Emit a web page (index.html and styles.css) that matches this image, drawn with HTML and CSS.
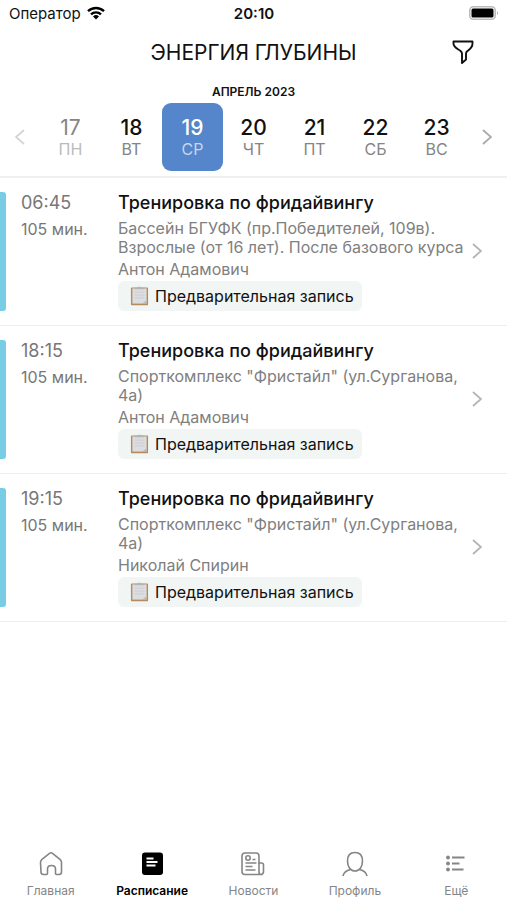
FILE: index.html
```html
<!DOCTYPE html>
<html lang="ru">
<head>
<meta charset="utf-8">
<meta name="viewport" content="width=device-width, initial-scale=1">
<title>Энергия глубины</title>
<link rel="stylesheet" href="styles.css">
</head>
<body>
<svg class="defs" aria-hidden="true">
  <symbol id="chevron" viewBox="0 0 10 16"><path d="M1 1l8 7-8 7" fill="none" stroke="currentColor" stroke-width="1.800"/></symbol>
  <symbol id="clipboard" viewBox="0 0 20 20">
    <rect x="1" y="1" width="18" height="19" rx="1" fill="#b58b5d"/>
    <rect x="2.500" y="2" width="15" height="16" fill="#dcdde1"/>
    <path d="M5 6h10M5 9h10M5 12h10" stroke="#cccdd2" stroke-width="1"/>
    <path d="M13 18l4-3v3z" fill="#b4b4b8"/>
    <path d="M5 3V1h3q0-1 2-1t2 1h3v2z" fill="#b5b5b3"/>
  </symbol>
</svg>
<header class="status">
  <span class="carrier">Оператор
    <svg class="wifi" viewBox="0 0 18 14" aria-hidden="true"><g fill="none" stroke="#000" stroke-width="2.4"><path d="M1 5.2a11.5 11.5 0 0 1 16 0"/><path d="M4 8.4a7.2 7.2 0 0 1 10 0"/></g><path d="M9 13.500l-3-3a4.300 4.300 0 0 1 6 0z"/></svg>
  </span>
  <time class="clock">20:10</time>
  <svg class="battery" viewBox="0 0 30 14" aria-hidden="true"><rect x=".8" y=".8" width="25.400" height="12.400" rx="3.500" fill="#fff" stroke="#bbb" stroke-width="1.600"/><rect x="2.500" y="2.500" width="22" height="9" rx="1.500"/><path d="M28 5q2 2 0 4z" fill="#aaa"/></svg>
</header>
<div class="titlebar">
  <h1>ЭНЕРГИЯ ГЛУБИНЫ</h1>
  <button class="filter" aria-label="Фильтр"><svg viewBox="0 0 22 24" aria-hidden="true"><path d="M1.500 1.500h19v2c0 4-2.500 5.500-4.500 7q-2 1.500-2 3v6l-4 3.500v-9.500q0-1.500-2-3c-2-1.500-6.500-3-6.500-7z" fill="none" stroke="#111" stroke-width="1.900" stroke-linejoin="round"/></svg></button>
</div>
<section class="calendar">
  <h2>АПРЕЛЬ 2023</h2>
  <div class="week">
    <button class="arrow prev" aria-label="Предыдущая неделя"><svg viewBox="0 0 10 16"><use href="#chevron"/></svg></button>
    <button class="day past"><b>17</b><span>ПН</span></button>
    <button class="day"><b>18</b><span>ВТ</span></button>
    <button class="day selected"><b>19</b><span>СР</span></button>
    <button class="day"><b>20</b><span>ЧТ</span></button>
    <button class="day"><b>21</b><span>ПТ</span></button>
    <button class="day"><b>22</b><span>СБ</span></button>
    <button class="day"><b>23</b><span>ВС</span></button>
    <button class="arrow" aria-label="Следующая неделя"><svg viewBox="0 0 10 16"><use href="#chevron"/></svg></button>
  </div>
</section>
<main class="list">
  <article class="item">
    <div class="when"><time>06:45</time><span>105 мин.</span></div>
    <div class="info">
      <h3>Тренировка по фридайвингу</h3>
      <p class="place">Бассейн БГУФК (пр.Победителей, 109в). Взрослые (от 16 лет). После базового курса</p>
      <p class="coach">Антон Адамович</p>
      <span class="tag"><svg viewBox="0 0 20 20" aria-hidden="true"><use href="#clipboard"/></svg>Предварительная запись</span>
    </div>
    <svg class="more" viewBox="0 0 10 16" aria-hidden="true"><use href="#chevron"/></svg>
  </article>
  <article class="item">
    <div class="when"><time>18:15</time><span>105 мин.</span></div>
    <div class="info">
      <h3>Тренировка по фридайвингу</h3>
      <p class="place">Спорткомплекс "Фристайл" (ул.Сурганова, 4а)</p>
      <p class="coach">Антон Адамович</p>
      <span class="tag"><svg viewBox="0 0 20 20" aria-hidden="true"><use href="#clipboard"/></svg>Предварительная запись</span>
    </div>
    <svg class="more" viewBox="0 0 10 16" aria-hidden="true"><use href="#chevron"/></svg>
  </article>
  <article class="item">
    <div class="when"><time>19:15</time><span>105 мин.</span></div>
    <div class="info">
      <h3>Тренировка по фридайвингу</h3>
      <p class="place">Спорткомплекс "Фристайл" (ул.Сурганова, 4а)</p>
      <p class="coach">Николай Спирин</p>
      <span class="tag"><svg viewBox="0 0 20 20" aria-hidden="true"><use href="#clipboard"/></svg>Предварительная запись</span>
    </div>
    <svg class="more" viewBox="0 0 10 16" aria-hidden="true"><use href="#chevron"/></svg>
  </article>
</main>
<nav class="tabs">
  <a href="#home"><svg viewBox="0 0 26 26" aria-hidden="true"><path d="M2.500 11.500q0-2 1.500-3.200l7.500-6q1.500-1.200 3 0l7.500 6q1.500 1.200 1.500 3.200v9.500q0 2.500-2.500 2.500h-2.500q-1 0-1-1v-4.500q0-3.500-4-3.500t-4 3.500v4.500q0 1-1 1h-3q-2.500 0-2.500-2.500z"/></svg>Главная</a>
  <a href="#schedule" class="active"><svg viewBox="0 0 26 26" aria-hidden="true"><rect x="3" y="1.500" width="21" height="22.500" rx="3" fill="#000" stroke="none"/><path d="M7.500 7.500h7M7.500 11h11M7.500 14.500h9" stroke="#fff" stroke-width="1.800"/></svg>Расписание</a>
  <a href="#news"><svg viewBox="0 0 26 26" aria-hidden="true"><path d="M21 23.500H5q-3 0-3-3V5q0-3 3-3h11q3 0 3 3v16q0 2.500 2 2.500t2.500-2.500V14q0-2-2-2h-3.500"/><circle cx="8" cy="7" r="2.200"/><path d="M12.500 8.500h3M5.500 12h11M5.500 15.500h7M5.500 19h10"/></svg>Новости</a>
  <a href="#profile"><svg viewBox="0 0 26 26" aria-hidden="true"><path d="M13 1.500c5 0 7.500 3.500 7.500 8.500 0 6-3 10-7.500 10s-7.500-4-7.500-10c0-5 2.500-8.500 7.500-8.500zM1 25q1-5 7.500-6.500M25 25q-1-5-7.500-6.500"/></svg>Профиль</a>
  <a href="#more"><svg viewBox="0 0 26 26" aria-hidden="true"><path d="M9 6.500h12.500M9 12.500h7.500M9 18.500h11.500" stroke-width="1.800"/><g fill="currentColor" stroke="none"><circle cx="5" cy="6.500" r="1.900"/><circle cx="5" cy="12.500" r="1.900"/><circle cx="5" cy="18.500" r="1.900"/></g></svg>Ещё</a>
</nav>
</body>
</html>
```
FILE: styles.css
```css
* { box-sizing: border-box; }
body {
  margin: 0;
  min-height: 100vh;
  display: flex;
  flex-direction: column;
  background: #fff;
  color: #111;
  font-family: Inter, "Liberation Sans", sans-serif;
}
h1, h2, h3, p { margin: 0; }
button { border: 0; padding: 0; background: none; font: inherit; color: inherit; }
.defs { display: none; }

.status {
  display: grid;
  grid-template-columns: 1fr auto 1fr;
  align-items: center;
  height: 28px;
  padding: 0 8px 2px 9px;
  font-size: 15px;
}
.carrier { display: flex; align-items: center; gap: 6px; }
.wifi { width: 18px; height: 14px; }
.clock { font-weight: 600; }
.battery { width: 30px; height: 14px; justify-self: end; }

.titlebar {
  display: grid;
  grid-template-columns: 1fr auto 1fr;
  align-items: center;
  height: 48px;
  padding: 0 33px;
}
h1 { grid-column: 2; font-size: 21px; font-weight: 400; }
.filter { justify-self: end; width: 22px; height: 24px; }
.filter svg { display: block; }

.calendar { padding-top: 8px; border-bottom: 2px solid #efefef; }
h2 { font-size: 12px; line-height: 16px; font-weight: 600; text-align: center; }
.week {
  display: grid;
  grid-template-columns: 40px repeat(7, 1fr) 40px;
  padding: 3px 0 5px;
}
.arrow { display: flex; align-items: center; justify-content: center; color: #aaa; }
.arrow svg { width: 10px; height: 16px; }
.prev svg { transform: scaleX(-1); }
.prev { color: #d4d4d4; }
.day {
  display: flex;
  flex-direction: column;
  align-items: center;
  justify-content: center;
  height: 68px;
  border-radius: 9px;
}
.day b { font-size: 21px; line-height: 24px; font-weight: 500; }
.day span { font-size: 16px; line-height: 18px; color: #858585; }
.past b { color: #858585; font-weight: 400; }
.past span { color: #bbb; }
.selected { background: #5585ca; color: #fff; }
.selected span { color: #c5d6ef; }

.item {
  position: relative;
  display: grid;
  grid-template-columns: 97px 1fr 10px;
  padding: 13px 25px 14px 21px;
  border-bottom: 1px solid #ededed;
}
.item::before {
  content: "";
  position: absolute;
  left: 0;
  top: 14px;
  bottom: 14px;
  width: 6px;
  border-radius: 0 3px 3px 0;
  background: #78cce4;
}
.when { display: flex; flex-direction: column; color: #777; }
.when time { font-size: 18px; line-height: 24px; }
.when span { font-size: 16px; line-height: 28px; }
h3 { font-size: 18px; line-height: 24px; font-weight: 500; white-space: nowrap; }
.place, .coach { font-size: 16px; color: #808080; }
.place { padding-top: 4px; padding-right: 5px; line-height: 19px; }
.coach { line-height: 24px; }
.tag {
  display: inline-flex;
  align-items: center;
  gap: 6px;
  height: 30px;
  padding: 0 8px 0 12px;
  border-radius: 6px;
  background: #f1f5f4;
  font-size: 16px;
  white-space: nowrap;
  vertical-align: top;
}
.tag svg { width: 19px; height: 20px; }
.more { width: 10px; height: 16px; align-self: center; color: #b4b4b4; }

.tabs {
  display: grid;
  grid-template-columns: repeat(5, 1fr);
  margin-top: auto;
  padding-bottom: 1px;
}
.tabs a {
  display: flex;
  flex-direction: column;
  align-items: center;
  gap: 6px;
  font-size: 12px;
  line-height: 16px;
  color: #858585;
  text-decoration: none;
}
.tabs svg { width: 26px; height: 26px; fill: none; stroke: currentColor; stroke-width: 1.6; }
.tabs .active { color: #000; font-weight: 600; }
```
